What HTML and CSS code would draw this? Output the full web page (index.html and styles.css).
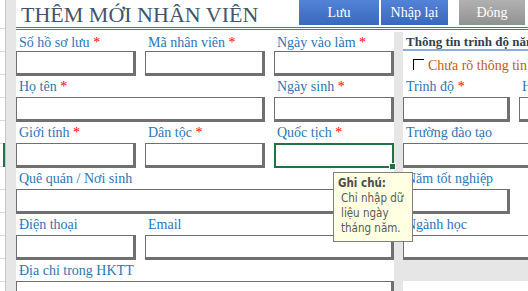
FILE: index.html
```html
<!DOCTYPE html>
<html lang="vi">
<head>
    <meta charset="utf-8">
    <title>Thêm mới nhân viên</title>
    <link rel="stylesheet" href="styles.css">
</head>
<body>
<div class="page">
    <div class="cells"><div class="cells-sel"></div></div>
    <div class="gutter"></div>

    <div class="sheet">
        <div class="head">
            <h1 class="title">THÊM MỚI NHÂN VIÊN</h1>
            <div class="btn btn-blue btn-save">Lưu</div>
            <div class="btn btn-blue btn-reset">Nhập lại</div>
            <div class="btn btn-gray btn-close">Đóng</div>
        </div>

        <div class="body">
            <!-- thong tin chung -->
            <div class="part part-left">
                <div class="lbl">Số hồ sơ lưu <span class="req">*</span></div>
                <div class="lbl">Mã nhân viên <span class="req">*</span></div>
                <div class="lbl">Ngày vào làm <span class="req">*</span></div>
                <div class="box"></div>
                <div class="box"></div>
                <div class="box"></div>

                <div class="lbl span2">Họ tên <span class="req">*</span></div>
                <div class="lbl">Ngày sinh <span class="req">*</span></div>
                <div class="box span2"></div>
                <div class="box"></div>

                <div class="lbl">Giới tính <span class="req">*</span></div>
                <div class="lbl">Dân tộc <span class="req">*</span></div>
                <div class="lbl">Quốc tịch <span class="req">*</span></div>
                <div class="box"></div>
                <div class="box"></div>
                <div class="box box-sel"></div>

                <div class="lbl span3">Quê quán / Nơi sinh</div>
                <div class="box span3"></div>

                <div class="lbl">Điện thoại</div>
                <div class="lbl span2">Email</div>
                <div class="box"></div>
                <div class="box span2"></div>

                <div class="lbl span3">Địa chỉ trong HKTT</div>
                <div class="box span3"></div>
            </div>

            <div class="divider"></div>

            <!-- trinh do -->
            <div class="part part-right">
                <div class="section span2">Thông tin trình độ năng lực chuyên môn</div>
                <div class="check span2"><span class="check-box"></span>Chưa rõ thông tin năng lực</div>

                <div class="lbl">Trình độ <span class="req">*</span></div>
                <div class="lbl">Hệ đào tạo <span class="req">*</span></div>
                <div class="box"></div>
                <div class="box"></div>

                <div class="lbl span2">Trường đào tạo</div>
                <div class="box span2"></div>

                <div class="lbl span2">Năm tốt nghiệp</div>
                <div class="box"></div>
                <div></div>

                <div class="lbl span2">Ngành học</div>
                <div class="box span2"></div>

                <div class="band span2"></div>
                <div class="span2"></div>
            </div>
        </div>
    </div>

    <div class="note">
        <b>Ghi chú:</b>
        <div class="note-text">Chỉ nhập dữ<br>liệu ngày<br>tháng năm.</div>
    </div>
</div>
</body>
</html>
```

FILE: styles.css
```css
html, body { margin: 0; padding: 0; }
body { background: #fff; font-family: "Liberation Serif", "Times New Roman", serif; }

.page { position: relative; display: flex; width: 528px; height: 291px; overflow: hidden; }

/* excel cells at the left */
.cells { flex: 0 0 4px; border-right: 1px solid #c6c6c6; background: repeating-linear-gradient(#fff 0 22px, #d9d9d9 22px 23px); background-position: 0 6px; }
.cells-sel { width: 2px; height: 24px; margin: 143px 0 0 3px; background: #217346; }
.gutter { flex: 0 0 10px; background: #e6e6e6; }

.sheet { flex: 1; display: flex; flex-direction: column; min-width: 0; }

/* header */
.head { display: flex; height: 27px; border-bottom: 3px double #4472c4; }
.title { flex: 0 0 278px; margin: 0; padding: 2px 0 0 5px; font-size: 22px; line-height: 26px; font-weight: normal; color: #44546a; white-space: nowrap; }
.btn { height: 25px; display: flex; align-items: center; justify-content: center; color: #fff; font-size: 14px; }
.btn-blue { background: linear-gradient(#5283d6, #3968bd); }
.btn-gray { background: linear-gradient(#b1b1b1, #919191); }
.btn-save { width: 80px; margin-right: 2px; }
.btn-reset { width: 67px; margin-right: 11px; }
.btn-close { width: 66px; }

/* form */
.body { display: flex; margin-top: 2px; flex: 1; }
.part { display: grid; column-gap: 9px; grid-template-rows: 19px 25px 21px 25px 21px 25px 21px 25px 21px 25px 21px 25px; }
.part-left { grid-template-columns: 120px 120px 120px; }
.part-right { grid-template-columns: 107px 120px; }
.divider { flex: 0 0 9px; background: #e6e6e6; }

.span2 { grid-column: span 2; }
.span3 { grid-column: span 3; }

.lbl { box-sizing: border-box; padding: 3px 0 0 3px; font-size: 14px; line-height: 16px; color: #2e75b6; white-space: nowrap; }
.req { color: #f00; }

.box { box-sizing: border-box; position: relative; background: #fff; border-style: solid; border-color: #716f6f; border-width: 1px 3px 3px 1px; }
.box-sel { border: 2px solid #217346; }
.box-sel::after { content: ""; position: absolute; right: -4px; bottom: -4px; width: 5px; height: 5px; background: #217346; border: 1px solid #fff; }

.section { box-sizing: border-box; padding: 3px 0 0 3px; border-bottom: 2px solid #8faadc; font-size: 13px; line-height: 14px; font-weight: bold; color: #333f4f; white-space: nowrap; overflow: hidden; }
.check { display: flex; align-items: flex-start; padding: 8px 0 0 10px; font-size: 14px; line-height: 13px; color: #c55a11; white-space: nowrap; overflow: hidden; }
.check-box { flex: 0 0 10px; height: 10px; margin-right: 4px; border-top: 1px solid #000; border-left: 1px solid #000; }
.band { background: #e6e6e6; }

/* excel comment */
.note { position: absolute; left: 333px; top: 172px; width: 80px; height: 70px; box-sizing: border-box; padding: 3px 0 0 4px; background: #ffffe1; border: 1px solid #808080; font-family: "DejaVu Sans Condensed", "Liberation Sans", sans-serif; font-size: 11.5px; line-height: 15px; color: #595959; }
.note b { color: #4d4d4d; }
.note-text { padding-left: 3px; }
```
